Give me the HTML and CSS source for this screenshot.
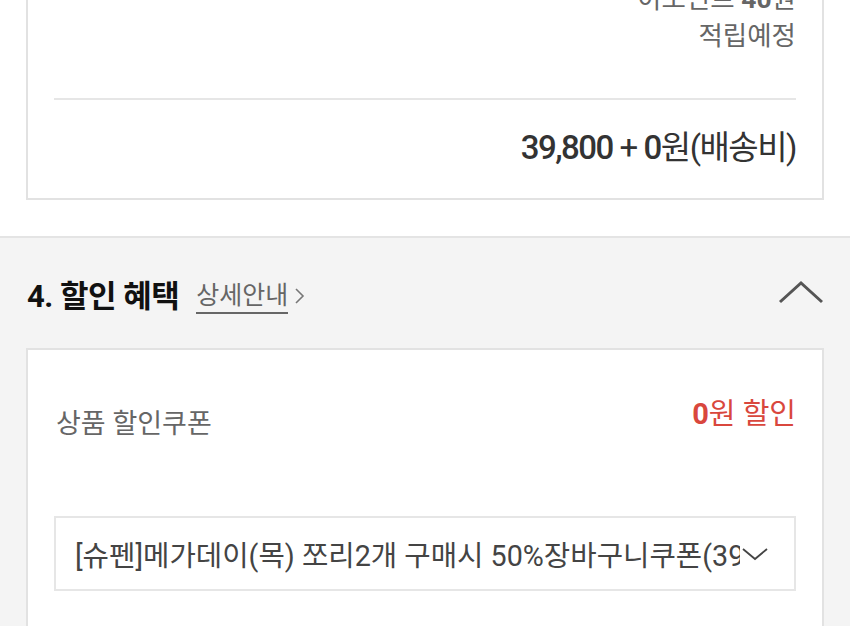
FILE: index.html
```html
<!DOCTYPE html>
<html lang="ko">
<head>
    <meta charset="UTF-8">
    <title>주문서 작성</title>
    <link rel="stylesheet" href="styles.css">
</head>
<body>

    <!-- 결제 금액 요약 -->
    <div class="summary">
        <div class="box summary-box">
            <div class="point">
                <p>이포인트 <b>40</b>원</p>
                <p>적립예정</p>
            </div>
            <div class="total">
                <b>39,800</b> + <b>0</b>원(배송비)
            </div>
        </div>
    </div>

    <!-- 4. 할인 혜택 -->
    <div class="discount">
        <div class="section-head">
            <h2>4. 할인 혜택</h2>
            <a class="guide" href="#">상세안내</a>
            <svg class="guide-arrow" width="12" height="20" viewBox="0 0 12 20">
                <polyline points="2,3 9,10 2,17" fill="none" stroke="#777" stroke-width="1.6"/>
            </svg>
            <svg class="toggle" width="46" height="26" viewBox="0 0 46 26">
                <polyline points="2,22 23,3 44,22" fill="none" stroke="#555" stroke-width="3"/>
            </svg>
        </div>

        <div class="box coupon-box">
            <div class="coupon-row">
                <span class="coupon-label">상품 할인쿠폰</span>
                <span class="coupon-amount"><b>0</b>원 할인</span>
            </div>
            <div class="coupon-select">
                <span class="coupon-name">[슈펜]메가데이(목) 쪼리2개 구매시 50%장바구니쿠폰(39,800원 이상 구매시)</span>
                <svg class="select-arrow" width="26" height="14" viewBox="0 0 26 14">
                    <polyline points="1,2 13,12 25,2" fill="none" stroke="#444" stroke-width="1.8"/>
                </svg>
            </div>
        </div>
    </div>

</body>
</html>
```

FILE: styles.css
```css
*{
    margin: 0;
    padding: 0;
    box-sizing: border-box;
}

body{
    font-family: Roboto, "Noto Sans CJK KR", sans-serif;
    background-color: #fff;
    color: #333;
    overflow: hidden;
}

.box{
    border: 2px solid #e2e2e2;
    background-color: #fff;
}

/* 요약 영역 */
.summary{
    margin-top: -42px;
    padding: 0 26px 36px;
}

.summary-box{
    border-top: none;
    padding: 22px 26px 0;
}

.point{
    text-align: right;
    font-size: 26.5px;
    line-height: 37px;
    color: #666;
    padding-bottom: 44px;
    border-bottom: 2px solid #e6e6e6;
}

.point b{
    font-weight: 700;
}

.total{
    text-align: right;
    font-size: 33px;
    line-height: 40px;
    letter-spacing: -1.5px;
    color: #333;
    padding: 28px 0 30px;
}

.total b{
    font-weight: 500;
}

/* 할인 혜택 영역 */
.discount{
    background-color: #f4f4f4;
    border-top: 2px solid #e4e4e4;
    padding: 27px 26px 60px;
}

.section-head{
    display: flex;
    align-items: center;
    height: 56px;
    margin-bottom: 27px;
    padding-left: 1px;
}

.section-head h2{
    font-size: 31px;
    font-weight: 700;
    color: #111;
    letter-spacing: -0.5px;
}

.guide{
    margin-left: 17px;
    font-size: 25px;
    color: #666;
    text-decoration: none;
    border-bottom: 2px solid #666;
    line-height: 32px;
    margin-top: 8px;
}

.guide-arrow{
    margin-left: 6px;
    margin-top: 6px;
}

.toggle{
    margin-left: auto;
    margin-right: 0;
    margin-top: 0;
}

.coupon-box{
    padding: 46px 26px 40px;
}

.coupon-row{
    display: flex;
    justify-content: space-between;
    align-items: flex-start;
    margin-bottom: 74px;
}

.coupon-label{
    font-size: 27px;
    line-height: 36px;
    color: #666;
    padding: 10px 0 0 2px;
}

.coupon-amount{
    font-size: 29px;
    line-height: 36px;
    color: #d9473d;
}

.coupon-amount b{
    font-weight: 700;
}

.coupon-select{
    display: flex;
    align-items: center;
    height: 75px;
    border: 2px solid #e6e6e6;
    padding: 0 26px 0 19px;
}

.coupon-name{
    flex: 1;
    overflow: hidden;
    white-space: nowrap;
    font-size: 28.7px;
    color: #444;
}

.select-arrow{
    margin-left: 2px;
}
```
